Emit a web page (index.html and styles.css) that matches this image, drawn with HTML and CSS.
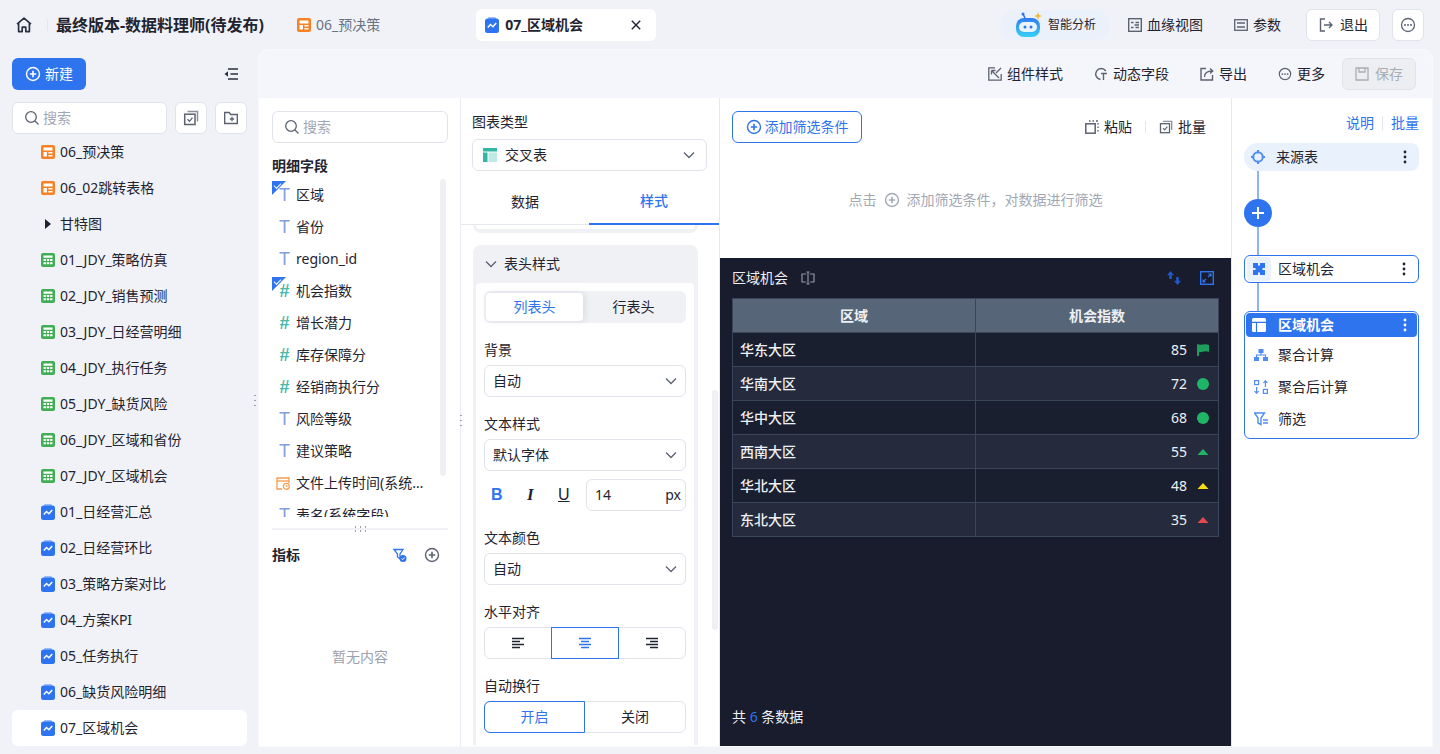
FILE: index.html
```html
<!DOCTYPE html>
<html lang="zh">
<head>
    <meta charset="UTF-8">
    <meta name="viewport" content="width=device-width, initial-scale=1.0">
    <title>最终版本-数据料理师(待发布)</title>
    <link rel="stylesheet" href="styles.css">
</head>
<body>
    <svg class="sprite" width="0" height="0">
        <defs>
            <linearGradient id="robot-head" x1="0" y1="0" x2="0" y2="1">
                <stop offset="0" stop-color="#2f7cf0"/>
                <stop offset="1" stop-color="#38d0f5"/>
            </linearGradient>
        </defs>
        <symbol id="i-home" viewBox="0 0 16 16"><path d="M1 7.2 8 1.2l7 6M2.600 6v8.600h3.600v-4.400h3.600v4.400h3.600V6" fill="none" stroke="currentColor" stroke-width="1.700" stroke-linejoin="round"/></symbol>
        <symbol id="i-sheet" viewBox="0 0 14 14"><rect width="14" height="14" rx="2" fill="#fa8123"/><path d="M2.500 2.500h9v3h-9zM2.500 7h3.400v4.500H2.500zM7.400 7h4.100v1.600H7.400zM7.400 9.900h4.100v1.600H7.400z" fill="#fff"/></symbol>
        <symbol id="i-calc" viewBox="0 0 14 14"><rect width="14" height="14" rx="2" fill="#3fae54"/><path d="M2.500 2.500h9v2.200h-9zM2.500 6h2.400v2H2.500zM5.800 6h2.400v2H5.800zM9.100 6h2.400v2H9.100zM2.500 9.300h2.400v2H2.500zM5.800 9.300h2.400v2H5.800zM9.100 9.300h2.400v2H9.100z" fill="#fff"/></symbol>
        <symbol id="i-chart" viewBox="0 0 14 16"><rect x="3" y="0" width="8" height="3" rx="1.200" fill="#9dbdf7"/><rect y="1.500" width="14" height="14.500" rx="2.500" fill="#2f74ef"/><path d="M2.800 10.500 5.500 7.500l2.400 2.200 3.300-3.700" fill="none" stroke="#fff" stroke-width="1.500"/></symbol>
        <symbol id="i-plus-c" viewBox="0 0 16 16"><circle cx="8" cy="8" r="6.500" fill="none" stroke="currentColor" stroke-width="1.400"/><path d="M8 4.800v6.400M4.800 8h6.400" stroke="currentColor" stroke-width="1.600"/></symbol>
        <symbol id="i-search" viewBox="0 0 16 16"><circle cx="7" cy="7" r="5.300" fill="none" stroke="currentColor" stroke-width="1.300"/><path d="m11 11 3.500 3.500" stroke="currentColor" stroke-width="1.300"/></symbol>
        <symbol id="i-batch" viewBox="0 0 16 16"><path d="M4.500 1.500h10v10" fill="none" stroke="currentColor" stroke-width="1.500" opacity=".7"/><rect x="1.700" y="4.200" width="10.300" height="10.300" fill="none" stroke="currentColor" stroke-width="1.500"/><path d="m4.500 9.300 2 2 3-3.600" fill="none" stroke="currentColor" stroke-width="1.300"/></symbol>
        <symbol id="i-folder" viewBox="0 0 16 16"><path d="M1.700 2.500h4.500l1.500 2h6.600v9H1.700z" fill="none" stroke="currentColor" stroke-width="1.400"/><path d="M9 6.800v4.400M6.800 9h4.400" stroke="currentColor" stroke-width="1.300"/></symbol>
        <symbol id="i-collapse" viewBox="0 0 14 12"><path d="M4 1h10M6.500 6H14M4 11h10" stroke="currentColor" stroke-width="1.700"/><path d="M4 3.300.5 6 4 8.700z" fill="currentColor"/></symbol>
        <symbol id="i-chev" viewBox="0 0 12 8"><path d="m1 1.500 5 5 5-5" fill="none" stroke="currentColor" stroke-width="1.300"/></symbol>
        <symbol id="i-more" viewBox="0 0 16 16"><circle cx="8" cy="8" r="6.500" fill="none" stroke="currentColor" stroke-width="1.300"/><circle cx="5" cy="8" r="1" fill="currentColor"/><circle cx="8" cy="8" r="1" fill="currentColor"/><circle cx="11" cy="8" r="1" fill="currentColor"/></symbol>
        <symbol id="i-dots" viewBox="0 0 4 14"><circle cx="2" cy="2" r="1.400" fill="currentColor"/><circle cx="2" cy="7" r="1.400" fill="currentColor"/><circle cx="2" cy="12" r="1.400" fill="currentColor"/></symbol>
        <symbol id="i-lineage" viewBox="0 0 14 14"><rect x=".7" y=".7" width="12.600" height="12.600" fill="none" stroke="currentColor" stroke-width="1.400"/><path d="M3 4.500h2.500M3 9.500h2.500M6.500 7h4.500M7.500 4.500H11M7.500 9.500H11" stroke="currentColor" stroke-width="1.400"/></symbol>
        <symbol id="i-param" viewBox="0 0 14 12"><rect x=".7" y=".7" width="12.600" height="10.600" fill="none" stroke="currentColor" stroke-width="1.300"/><path d="M3 4h8M3 8h8" stroke="currentColor" stroke-width="1.300"/></symbol>
        <symbol id="i-exit" viewBox="0 0 16 16"><path d="M7 2H2.500v12H7" fill="none" stroke="currentColor" stroke-width="1.400"/><path d="M6 8h8M11 5l3 3-3 3" fill="none" stroke="currentColor" stroke-width="1.400"/></symbol>
        <symbol id="i-close" viewBox="0 0 10 10"><path d="m.8.800 8.400 8.400M9.200.800.800 9.200" stroke="currentColor" stroke-width="1.400"/></symbol>
        <symbol id="i-style" viewBox="0 0 14 14"><path d="M7 .8H.8v12.400h12.400V7" fill="none" stroke="currentColor" stroke-width="1.300"/><path d="M3.500 3.500 11 11M3.500 3.500h4M3.500 3.500v4M13 1 8 6" fill="none" stroke="currentColor" stroke-width="1.300"/></symbol>
        <symbol id="i-dyn" viewBox="0 0 14 14"><path d="M11.800 4A5.500 5.500 0 1 0 6.500 12.500" fill="none" stroke="currentColor" stroke-width="1.400"/><path d="M7 6.500h6M9.500 6.500V13" stroke="currentColor" stroke-width="1.400"/></symbol>
        <symbol id="i-export" viewBox="0 0 14 14"><path d="M6 1.500H1v11.500h11.500V8" fill="none" stroke="currentColor" stroke-width="1.400"/><path d="M4.500 10c0-4 2.500-6 8-6M10 1.500 12.800 4 10 6.500" fill="none" stroke="currentColor" stroke-width="1.300"/></symbol>
        <symbol id="i-save" viewBox="0 0 14 14"><path d="M1 1h12v12H1z" fill="none" stroke="currentColor" stroke-width="1.300"/><path d="M4 1v4h6V1" fill="none" stroke="currentColor" stroke-width="1.300"/></symbol>
        <symbol id="i-paste" viewBox="0 0 14 14"><rect x=".8" y="3.800" width="9.400" height="9.400" fill="none" stroke="currentColor" stroke-width="1.500"/><path d="M4 1h1.500M7.500 1H9M11 1h2M13 3v1.500M13 6.500V8M13 10v1.500" stroke="currentColor" stroke-width="1.400"/></symbol>
        <symbol id="i-cross" viewBox="0 0 14 14"><rect width="14" height="3.500" fill="#35b5a5"/><rect y="4.500" width="4.500" height="9.500" fill="#35b5a5"/><rect x="5.500" y="4.500" width="8.500" height="9.500" fill="#bfe9e3"/></symbol>
        <symbol id="i-filter-ok" viewBox="0 0 14 14"><path d="M1 1.500h9L7 6v5L4.500 9V6z" fill="none" stroke="currentColor" stroke-width="1.300"/><circle cx="10" cy="10.500" r="3.500" fill="currentColor"/><path d="m8.500 10.500 1.200 1.200 2-2.200" fill="none" stroke="#fff"/></symbol>
        <symbol id="i-cal" viewBox="0 0 14 14"><path d="M6 13H1V2h12v5" fill="none" stroke="#f79a4d" stroke-width="1.300"/><path d="M1 5h12" stroke="#f79a4d" stroke-width="1.300"/><circle cx="10.300" cy="10.300" r="3" fill="none" stroke="#f79a4d" stroke-width="1.200"/><path d="M10.300 8.800v1.600h1.400" fill="none" stroke="#f79a4d"/></symbol>
        <symbol id="i-target" viewBox="0 0 14 14"><circle cx="7" cy="7" r="4.800" fill="none" stroke="#4f8df5" stroke-width="2"/><path d="M7 0v3.200M7 10.800V14M0 7h3.200M10.800 7H14" stroke="#4f8df5" stroke-width="2"/></symbol>
        <symbol id="i-puzzle" viewBox="0 0 12 12"><path d="M0 0h5v2.500h2V0h5v5H9.500v2H12v5H7V9.500H5V12H0V7h2.500V5H0z" fill="#2f74ef"/></symbol>
        <symbol id="i-table" viewBox="0 0 14 14"><rect width="14" height="14" rx="1.500" fill="#fff"/><path d="M0 4.300h14M4.500 4.300V14" stroke="#2f74ef" stroke-width="1.200"/></symbol>
        <symbol id="i-tree" viewBox="0 0 14 12"><path d="M4.500 0h5v4h-5zM0 8h5v4H0zM9 8h5v4H9z" fill="#4f8df5"/><path d="M2.500 8V6h9v2M7 4v2" fill="none" stroke="#4f8df5" stroke-width="1.200"/></symbol>
        <symbol id="i-swap" viewBox="0 0 14 14"><rect x=".6" y=".6" width="4" height="4" fill="none" stroke="#4f8df5" stroke-width="1.200"/><rect x="9.400" y="9.400" width="4" height="4" fill="none" stroke="#4f8df5" stroke-width="1.200"/><path d="M11.400 7V1M9.400 2.800l2-2 2 2M2.600 7v6M.6 11.200l2 2 2-2" fill="none" stroke="#4f8df5" stroke-width="1.200"/></symbol>
        <symbol id="i-filter" viewBox="0 0 14 14"><path d="M.5 1h10L7 6v6.500L4 11V6z" fill="none" stroke="#4f8df5" stroke-width="1.400"/><path d="M9 8h5M9 11h5" stroke="#4f8df5" stroke-width="1.300"/></symbol>
        <symbol id="i-left" viewBox="0 0 14 12"><path d="M1 1.500h12M1 4.500h8M1 7.500h12M1 10.500h8" stroke="currentColor" stroke-width="1.400"/></symbol>
        <symbol id="i-center" viewBox="0 0 14 12"><path d="M1 1.500h12M3 4.500h8M1 7.500h12M3 10.500h8" stroke="currentColor" stroke-width="1.400"/></symbol>
        <symbol id="i-right" viewBox="0 0 14 12"><path d="M1 1.500h12M5 4.500h8M1 7.500h12M5 10.500h8" stroke="currentColor" stroke-width="1.400"/></symbol>
        <symbol id="i-resize" viewBox="0 0 14 14"><path d="M5 3H1v8h4M9 3h4v8H9M7 1v12M5.500 1h3M5.500 13h3" fill="none" stroke="currentColor" stroke-width="1.200"/></symbol>
        <symbol id="i-sort" viewBox="0 0 14 14"><path d="M3.500 0 7 4.200H4.800V8H2.200V4.200H0zM10.500 14 7 9.800h2.200V6h2.600v3.800H14z" fill="#2257c4"/></symbol>
        <symbol id="i-expand" viewBox="0 0 14 14"><rect x=".7" y=".7" width="12.600" height="12.600" fill="none" stroke="#2f74ef" stroke-width="1.400"/><path d="M8 6l3-3M8.500 3H11v2.500M6 8l-3 3M3 8.500V11h2.500" fill="none" stroke="#2f74ef" stroke-width="1.100"/></symbol>
        <symbol id="i-plus" viewBox="0 0 12 12"><path d="M6 0v12M0 6h12" stroke="#fff" stroke-width="2"/></symbol>
    </svg>

    <header class="topbar">
        <svg class="home"><use href="#i-home"/></svg>
        <span class="topbar-sep"></span>
        <h1 class="title">最终版本-数据料理师(待发布)</h1>
        <div class="tab">
            <svg class="i14"><use href="#i-sheet"/></svg>
            <span>06_预决策</span>
        </div>
        <div class="tab tab-active">
            <svg class="tall"><use href="#i-chart"/></svg>
            <span class="tab-name">07_区域机会</span>
            <svg class="tab-close"><use href="#i-close"/></svg>
        </div>
        <div class="topbar-right">
            <div class="ai-pill">
                <svg class="robot" viewBox="0 0 28 26">
                    <path d="M10 6 8 2" stroke="#2f74ef" stroke-width="1.500"/>
                    <circle cx="8" cy="2" r="1.500" fill="#2f74ef"/>
                    <path d="m23 0 1 3 3 1-3 1-1 3-1-3-3-1 3-1z" fill="#f8b62d"/>
                    <rect x="1" y="6" width="24" height="19" rx="8" fill="url(#robot-head)"/>
                    <rect x="4" y="10" width="18" height="10" rx="5" fill="#e9f4ff"/>
                    <circle cx="10" cy="15" r="1.500" fill="#2f74ef"/>
                    <circle cx="16" cy="15" r="1.500" fill="#2f74ef"/>
                </svg>
                <span>智能分析</span>
            </div>
            <div class="top-link lineage"><svg class="i14"><use href="#i-lineage"/></svg>血缘视图</div>
            <div class="top-link param"><svg class="i14"><use href="#i-param"/></svg>参数</div>
            <div class="top-btn exit"><svg class="i16"><use href="#i-exit"/></svg>退出</div>
            <div class="top-btn square"><svg class="i16"><use href="#i-more"/></svg></div>
        </div>
    </header>

    <div class="layout">
        <aside class="sidebar">
            <div class="side-head">
                <button class="new-btn"><svg class="i16"><use href="#i-plus-c"/></svg>新建</button>
                <svg class="collapse"><use href="#i-collapse"/></svg>
            </div>
            <div class="side-tools">
                <div class="search side-search"><svg class="i16"><use href="#i-search"/></svg><span>搜索</span></div>
                <div class="tool-btn"><svg class="i16"><use href="#i-batch"/></svg></div>
                <div class="tool-btn"><svg class="i16"><use href="#i-folder"/></svg></div>
            </div>
            <ul class="tree">
                <li><svg class="i14"><use href="#i-sheet"/></svg>06_预决策</li>
                <li><svg class="i14"><use href="#i-sheet"/></svg>06_02跳转表格</li>
                <li><span class="caret"></span>甘特图</li>
                <li><svg class="i14"><use href="#i-calc"/></svg>01_JDY_策略仿真</li>
                <li><svg class="i14"><use href="#i-calc"/></svg>02_JDY_销售预测</li>
                <li><svg class="i14"><use href="#i-calc"/></svg>03_JDY_日经营明细</li>
                <li><svg class="i14"><use href="#i-calc"/></svg>04_JDY_执行任务</li>
                <li><svg class="i14"><use href="#i-calc"/></svg>05_JDY_缺货风险</li>
                <li><svg class="i14"><use href="#i-calc"/></svg>06_JDY_区域和省份</li>
                <li><svg class="i14"><use href="#i-calc"/></svg>07_JDY_区域机会</li>
                <li><svg class="tall"><use href="#i-chart"/></svg>01_日经营汇总</li>
                <li><svg class="tall"><use href="#i-chart"/></svg>02_日经营环比</li>
                <li><svg class="tall"><use href="#i-chart"/></svg>03_策略方案对比</li>
                <li><svg class="tall"><use href="#i-chart"/></svg>04_方案KPI</li>
                <li><svg class="tall"><use href="#i-chart"/></svg>05_任务执行</li>
                <li><svg class="tall"><use href="#i-chart"/></svg>06_缺货风险明细</li>
                <li class="active"><svg class="tall"><use href="#i-chart"/></svg>07_区域机会</li>
            </ul>
            <span class="grip grip-side"></span>
        </aside>

        <main class="editor">
            <div class="editor-bar">
                <div class="bar-item"><svg class="i14"><use href="#i-style"/></svg>组件样式</div>
                <div class="bar-item"><svg class="i14"><use href="#i-dyn"/></svg>动态字段</div>
                <div class="bar-item"><svg class="i14"><use href="#i-export"/></svg>导出</div>
                <div class="bar-item last"><svg class="i14"><use href="#i-more"/></svg>更多</div>
                <button class="save-btn"><svg class="i14"><use href="#i-save"/></svg>保存</button>
            </div>

            <div class="panes">
                <section class="fields">
                    <div class="search field-search"><svg class="i16"><use href="#i-search"/></svg><span>搜索</span></div>
                    <div class="fields-title">明细字段</div>
                    <div class="field-list">
                        <div class="field checked"><span class="ft">T</span>区域</div>
                        <div class="field"><span class="ft">T</span>省份</div>
                        <div class="field"><span class="ft">T</span>region_id</div>
                        <div class="field checked"><span class="fn">#</span>机会指数</div>
                        <div class="field"><span class="fn">#</span>增长潜力</div>
                        <div class="field"><span class="fn">#</span>库存保障分</div>
                        <div class="field"><span class="fn">#</span>经销商执行分</div>
                        <div class="field"><span class="ft">T</span>风险等级</div>
                        <div class="field"><span class="ft">T</span>建议策略</div>
                        <div class="field"><svg class="field-cal"><use href="#i-cal"/></svg><span class="ellipsis">文件上传时间(系统字段)</span></div>
                        <div class="field"><span class="ft">T</span>表名(系统字段)</div>
                        <span class="scroll-thumb"></span>
                    </div>
                    <div class="fields-split"><span class="grip grip-h"></span></div>
                    <div class="metric-head">
                        <span>指标</span>
                        <svg class="i14 metric-filter"><use href="#i-filter-ok"/></svg>
                        <svg class="i16 metric-add"><use href="#i-plus-c"/></svg>
                    </div>
                    <div class="empty">暂无内容</div>
                    <span class="grip grip-fields"></span>
                </section>

                <section class="config">
                    <div class="config-head">
                        <div class="label">图表类型</div>
                        <div class="select"><span class="select-val"><svg class="i14"><use href="#i-cross"/></svg>交叉表</span><svg class="chev"><use href="#i-chev"/></svg></div>
                        <div class="config-tabs">
                            <div class="config-tab">数据</div>
                            <div class="config-tab on">样式</div>
                        </div>
                    </div>
                    <div class="config-body">
                        <div class="stub-card"></div>
                        <div class="card">
                            <div class="card-head"><svg class="chev"><use href="#i-chev"/></svg>表头样式</div>
                            <div class="card-inner">
                                <div class="switch">
                                    <div class="switch-item on">列表头</div>
                                    <div class="switch-item">行表头</div>
                                </div>
                                <div class="label form-label">背景</div>
                                <div class="select"><span>自动</span><svg class="chev"><use href="#i-chev"/></svg></div>
                                <div class="label form-label">文本样式</div>
                                <div class="select"><span>默认字体</span><svg class="chev"><use href="#i-chev"/></svg></div>
                                <div class="font-row">
                                    <span class="fmt fmt-b">B</span>
                                    <span class="fmt fmt-i">I</span>
                                    <span class="fmt fmt-u">U</span>
                                    <div class="size-input"><span>14</span><span>px</span></div>
                                </div>
                                <div class="label form-label">文本颜色</div>
                                <div class="select"><span>自动</span><svg class="chev"><use href="#i-chev"/></svg></div>
                                <div class="label form-label">水平对齐</div>
                                <div class="btn-group">
                                    <div class="btn-cell"><svg class="align"><use href="#i-left"/></svg></div>
                                    <div class="btn-cell on"><svg class="align"><use href="#i-center"/></svg></div>
                                    <div class="btn-cell"><svg class="align"><use href="#i-right"/></svg></div>
                                </div>
                                <div class="label form-label">自动换行</div>
                                <div class="btn-group two">
                                    <div class="btn-cell on first">开启</div>
                                    <div class="btn-cell">关闭</div>
                                </div>
                            </div>
                        </div>
                        <span class="config-thumb"></span>
                    </div>
                </section>

                <section class="center">
                    <div class="filter-area">
                        <div class="filter-top">
                            <button class="add-filter"><svg class="i16"><use href="#i-plus-c"/></svg>添加筛选条件</button>
                            <div class="filter-actions">
                                <span class="filter-act"><svg class="i14"><use href="#i-paste"/></svg>粘贴</span>
                                <span class="act-sep"></span>
                                <span class="filter-act"><svg class="i14"><use href="#i-batch"/></svg>批量</span>
                            </div>
                        </div>
                        <div class="filter-hint">点击<svg class="i16"><use href="#i-plus-c"/></svg>添加筛选条件，对数据进行筛选</div>
                    </div>
                    <div class="preview">
                        <div class="preview-head">
                            <span>区域机会</span>
                            <svg class="i14 resize"><use href="#i-resize"/></svg>
                            <svg class="i14 sort"><use href="#i-sort"/></svg>
                            <svg class="i14 expand"><use href="#i-expand"/></svg>
                        </div>
                        <table class="data-table">
                            <thead>
                                <tr><th>区域</th><th>机会指数</th></tr>
                            </thead>
                            <tbody>
                                <tr><td>华东大区</td><td class="num">85<svg class="mark" viewBox="0 0 12 12"><path d="M0 0c4 2 8-1 12 1v7C8 6 4 9 2 8v4H0z" fill="#1f9d5c"/></svg></td></tr>
                                <tr><td>华南大区</td><td class="num">72<svg class="mark" viewBox="0 0 12 12"><circle cx="6" cy="6" r="6" fill="#20b566"/></svg></td></tr>
                                <tr><td>华中大区</td><td class="num">68<svg class="mark" viewBox="0 0 12 12"><circle cx="6" cy="6" r="6" fill="#20b566"/></svg></td></tr>
                                <tr><td>西南大区</td><td class="num">55<svg class="mark" viewBox="0 0 12 12"><path d="M6 3 11.500 9H.5z" fill="#20b566"/></svg></td></tr>
                                <tr><td>华北大区</td><td class="num">48<svg class="mark" viewBox="0 0 12 12"><path d="M6 3 11.500 9H.5z" fill="#fadb14"/></svg></td></tr>
                                <tr><td>东北大区</td><td class="num">35<svg class="mark" viewBox="0 0 12 12"><path d="M6 3 11.500 9H.5z" fill="#e5484d"/></svg></td></tr>
                            </tbody>
                        </table>
                        <div class="preview-foot">共 <em>6</em> 条数据</div>
                    </div>
                </section>

                <section class="flow">
                    <div class="flow-links">
                        <span>说明</span>
                        <span class="flow-sep"></span>
                        <span>批量</span>
                    </div>
                    <div class="node source"><svg class="i14"><use href="#i-target"/></svg><span class="node-name">来源表</span><svg class="dots"><use href="#i-dots"/></svg></div>
                    <div class="link"></div>
                    <div class="plus"><svg class="i12"><use href="#i-plus"/></svg></div>
                    <div class="link"></div>
                    <div class="node step">
                        <span class="puzzle"><svg class="i12"><use href="#i-puzzle"/></svg></span>
                        <span class="node-name">区域机会</span>
                        <svg class="dots"><use href="#i-dots"/></svg>
                    </div>
                    <div class="link"></div>
                    <div class="group">
                        <div class="group-head"><svg class="i14"><use href="#i-table"/></svg><span class="node-name">区域机会</span><svg class="dots"><use href="#i-dots"/></svg></div>
                        <div class="group-item"><svg class="i14"><use href="#i-tree"/></svg>聚合计算</div>
                        <div class="group-item"><svg class="i14"><use href="#i-swap"/></svg>聚合后计算</div>
                        <div class="group-item"><svg class="i14"><use href="#i-filter"/></svg>筛选</div>
                    </div>
                </section>
            </div>
        </main>
    </div>
</body>
</html>
```

FILE: styles.css
```css
* {
    box-sizing: border-box;
}

html,
body {
    height: 100%;
}

body {
    margin: 0;
    height: 754px;
    overflow: hidden;
    background: #f0f2f8;
    color: #1f2430;
    font-family: "Noto Sans", "Noto Sans CJK SC", sans-serif;
    font-size: 14px;
    line-height: 20px;
}

button {
    font: inherit;
    cursor: pointer;
}

ul {
    margin: 0;
    padding: 0;
    list-style: none;
}

svg {
    flex: none;
    display: block;
}

.sprite {
    position: absolute;
}

.i12 {
    width: 12px;
    height: 12px;
}

.i14 {
    width: 14px;
    height: 14px;
}

.i16 {
    width: 16px;
    height: 16px;
}

.tall {
    width: 14px;
    height: 16px;
}

/* top bar */
.topbar {
    display: flex;
    align-items: center;
    height: 50px;
    padding: 0 16px;
}

.home {
    width: 16px;
    height: 16px;
    color: #2a3040;
}

.topbar-sep {
    width: 1px;
    height: 12px;
    margin: 0 8px 0 15px;
    background: #e4e6ee;
}

.title {
    margin: 0;
    font-size: 16px;
    font-weight: 700;
    line-height: 22px;
    white-space: nowrap;
}

.tab {
    display: flex;
    align-items: center;
    gap: 5px;
    margin-left: 33px;
    color: #6b7280;
}

.tab-active {
    gap: 6px;
    width: 180px;
    height: 32px;
    margin-left: 96px;
    padding: 0 15px 0 9px;
    border-radius: 6px;
    background: #fff;
    color: #1f2430;
}

.tab-name {
    flex: 1;
    font-weight: 700;
}

.tab-close {
    width: 10px;
    height: 10px;
}

.topbar-right {
    display: flex;
    align-items: center;
    margin-left: auto;
}

.ai-pill {
    display: flex;
    align-items: center;
    gap: 5px;
    width: 110px;
    height: 30px;
    padding-left: 15px;
    border-radius: 15px;
    background: #ebf1fb;
    font-size: 12px;
}

.robot {
    width: 28px;
    height: 26px;
}

.top-link {
    display: flex;
    align-items: center;
    gap: 5px;
}

.top-link svg {
    color: #5c6272;
}

.lineage {
    margin-left: 18px;
}

.param {
    margin-left: 31px;
}

.top-btn {
    display: flex;
    align-items: center;
    justify-content: center;
    gap: 6px;
    height: 32px;
    border: 1px solid #e0e3eb;
    border-radius: 6px;
    background: #fff;
}

.top-btn svg {
    color: #5c6272;
}

.exit {
    width: 74px;
    margin-left: 25px;
}

.square {
    width: 32px;
    margin-left: 12px;
}

/* page split */
.layout {
    display: flex;
    height: 696px;
    padding-right: 8px;
}

.sidebar {
    position: relative;
    flex: 0 0 259px;
    padding: 8px 12px 0;
}

.side-head {
    display: flex;
    align-items: center;
    justify-content: space-between;
    padding-right: 9px;
}

.new-btn {
    display: flex;
    align-items: center;
    justify-content: center;
    gap: 4px;
    width: 74px;
    height: 32px;
    padding: 0;
    border: 0;
    border-radius: 6px;
    background: #2f74ef;
    color: #fff;
}

.collapse {
    width: 14px;
    height: 12px;
    color: #2a3040;
}

.side-tools {
    display: flex;
    gap: 8px;
    margin-top: 12px;
}

.search {
    display: flex;
    align-items: center;
    gap: 3px;
    height: 32px;
    padding: 0 11px;
    border: 1px solid #e0e3eb;
    border-radius: 6px;
    background: #fff;
    color: #a3a8b4;
}

.search svg {
    color: #5c6272;
}

.side-search {
    width: 155px;
}

.tool-btn {
    display: flex;
    align-items: center;
    justify-content: center;
    width: 32px;
    height: 32px;
    border: 1px solid #e0e3eb;
    border-radius: 6px;
    background: #fff;
    color: #5c6272;
}

.tree li {
    display: flex;
    align-items: center;
    gap: 5px;
    height: 36px;
    padding-left: 29px;
    border-radius: 6px;
}

.tree li.active {
    background: #fff;
}

.caret {
    width: 14px;
    height: 10px;
    background: #1f2430;
    clip-path: polygon(4px 0, 10px 5px, 4px 10px);
}

.grip {
    position: absolute;
    background-image: radial-gradient(circle, #9ca1ad 1px, transparent 1.1px);
    background-size: 4px 5px;
}

.grip-side {
    top: 343px;
    right: 2px;
    width: 4px;
    height: 15px;
}

/* editor card */
.editor {
    flex: 1;
    display: flex;
    flex-direction: column;
    min-width: 0;
    overflow: hidden;
    border-radius: 10px 10px 0 0;
    background: #f5f6fb;
    box-shadow: 0 0 0 1px #f8f9fc;
}

.editor-bar {
    display: flex;
    align-items: center;
    justify-content: flex-end;
    flex: 0 0 48px;
    padding-right: 16px;
}

.bar-item {
    display: flex;
    align-items: center;
    gap: 5px;
    margin-right: 31px;
}

.bar-item svg {
    color: #5c6272;
}

.bar-item.last {
    margin-right: 17px;
}

.save-btn {
    display: flex;
    align-items: center;
    justify-content: center;
    gap: 6px;
    width: 74px;
    height: 32px;
    padding: 0;
    border: 1px solid #e0e3e8;
    border-radius: 6px;
    background: #eceef1;
    color: #a9adb5;
}

.panes {
    flex: 1;
    display: flex;
    min-height: 0;
    background: #fff;
}

/* fields pane */
.fields {
    position: relative;
    display: flex;
    flex-direction: column;
    flex: 0 0 202px;
    min-width: 0;
    padding: 13px 12px 0 13px;
    border-right: 1px solid #e9ebf1;
}

.field-search {
    width: 176px;
    flex: none;
}

.fields-title {
    margin-top: 13px;
    font-weight: 700;
}

.field-list {
    position: relative;
    flex: 0 0 338px;
    margin-top: 3px;
    overflow: hidden;
}

.field {
    position: relative;
    display: flex;
    align-items: center;
    gap: 5px;
    height: 32px;
    padding-left: 6px;
}

.ft,
.fn {
    width: 13px;
    font-family: "Liberation Sans", sans-serif;
    font-size: 18px;
    text-align: center;
}

.ft {
    color: #7f9fdd;
}

.fn {
    color: #4cb8a8;
    font-weight: 700;
}

.field-cal {
    width: 14px;
    height: 14px;
    margin-left: -2px;
    margin-right: 1px;
}

.ellipsis {
    width: 132px;
    overflow: hidden;
    white-space: nowrap;
    text-overflow: ellipsis;
}

.checked::before {
    content: "";
    position: absolute;
    top: 2px;
    left: 0;
    width: 14px;
    height: 14px;
    background: #2f74ef;
    clip-path: polygon(0 0, 100% 0, 0 100%);
}

.checked::after {
    content: "";
    position: absolute;
    top: 4px;
    left: 2px;
    width: 6px;
    height: 3px;
    border-left: 1px solid #fff;
    border-bottom: 1px solid #fff;
    transform: rotate(-45deg);
}

.scroll-thumb {
    position: absolute;
    top: 0;
    right: 2px;
    width: 6px;
    height: 297px;
    border-radius: 3px;
    background: #eef0f3;
}

.fields-split {
    position: relative;
    flex: none;
    height: 2px;
    margin-top: 11px;
    background: #f1f2f5;
}

.grip-h {
    top: -3px;
    left: 81px;
    width: 15px;
    height: 9px;
    background-size: 5px 4px;
}

.grip-fields {
    top: 315px;
    right: -3px;
    width: 4px;
    height: 15px;
}

.metric-head {
    display: flex;
    align-items: center;
    margin-top: 15px;
    padding-right: 8px;
    font-weight: 700;
}

.metric-filter {
    margin-left: auto;
    color: #2f74ef;
}

.metric-add {
    margin: 0 0 0 17px;
    color: #5c6272;
}

.empty {
    margin-top: 82px;
    color: #9ca1ad;
    text-align: center;
}

/* config pane */
.config {
    display: flex;
    flex-direction: column;
    flex: 0 0 259px;
    min-width: 0;
    min-height: 0;
    border-right: 1px solid #e6e8ee;
}

.config-head {
    flex: none;
    padding: 14px 12px 0 11px;
}

.config-head .label {
    margin-bottom: 7px;
}

.select {
    display: flex;
    align-items: center;
    justify-content: space-between;
    height: 32px;
    padding: 0 8px;
    border: 1px solid #e0e3eb;
    border-radius: 6px;
    background: #fff;
}

.config-head .select {
    padding: 0 11px 0 10px;
}

.select-val {
    display: flex;
    align-items: center;
    gap: 8px;
}

.chev {
    width: 12px;
    height: 8px;
    color: #5c6272;
}

.config-tabs {
    display: flex;
    height: 54px;
    margin: 0 -12px 0 -11px;
    border-bottom: 1px solid #e6e8ee;
}

.config-tab {
    display: flex;
    align-items: center;
    justify-content: center;
    flex: 0 0 128px;
    padding-top: 8px;
}

.config-tab.on {
    flex: 0 0 130px;
    margin-bottom: -1px;
    border-bottom: 2px solid #2f74ef;
    color: #2f74ef;
    font-weight: 500;
}

.config-body {
    position: relative;
    flex: 1;
    min-height: 0;
    padding: 0 21px 0 12px;
    overflow: hidden;
}

.stub-card {
    height: 8px;
    padding: 0 3px 4px;
    border-radius: 0 0 8px 8px;
    background: #f0f1f5;
}

.stub-card::before {
    content: "";
    display: block;
    height: 4px;
    border-radius: 0 0 4px 4px;
    background: #fff;
}

.card {
    margin-top: 12px;
    padding: 0 4px 0 3px;
    border-radius: 8px 8px 0 0;
    background: #f0f1f5;
}

.card-head {
    display: flex;
    align-items: center;
    gap: 7px;
    height: 38px;
    padding-left: 9px;
}

.card-inner {
    padding: 8px 8px 12px;
    border-radius: 4px 4px 0 0;
    background: #fff;
}

.switch {
    display: flex;
    height: 32px;
    padding: 2px;
    border-radius: 6px;
    background: #f0f1f5;
}

.switch-item {
    display: flex;
    flex: 1;
    align-items: center;
    justify-content: center;
    border-radius: 4px;
}

.switch-item.on {
    flex: 0 0 97px;
    background: #fff;
    color: #2f74ef;
    box-shadow: 2px 0 6px rgba(30, 40, 70, 0.1);
}

.form-label {
    margin-top: 17px;
    margin-bottom: 5px;
    height: 20px;
}

.font-row {
    display: flex;
    align-items: center;
    height: 32px;
    margin-top: 8px;
}

.fmt {
    width: 34px;
    font-family: "Liberation Sans", sans-serif;
    font-size: 16px;
}

.fmt-b {
    padding-left: 7px;
    color: #2f74ef;
    font-weight: 700;
}

.fmt-i {
    padding-left: 9px;
    font-family: "Liberation Serif", serif;
    font-style: italic;
    font-weight: 700;
    font-size: 17px;
}

.fmt-u {
    width: 34px;
    padding-left: 6px;
    text-decoration: underline;
}

.size-input {
    display: flex;
    align-items: center;
    justify-content: space-between;
    width: 100px;
    height: 32px;
    margin-left: auto;
    padding: 0 4px 0 8px;
    border: 1px solid #e0e3eb;
    border-radius: 6px;
}

.btn-group {
    display: grid;
    grid-template-columns: 66px 68px 66px;
    height: 32px;
    border: 1px solid #e0e3eb;
    border-radius: 6px;
}

.btn-group.two {
    grid-template-columns: 100px 100px;
}

.btn-cell {
    display: flex;
    align-items: center;
    justify-content: center;
    margin: -1px 0;
}

.btn-cell:first-child {
    margin-left: -1px;
}

.btn-cell.on {
    border: 1px solid #2f74ef;
    color: #2f74ef;
}

.btn-cell.first {
    border-radius: 6px 0 0 6px;
}

.align {
    width: 14px;
    height: 12px;
}

.config-thumb {
    position: absolute;
    top: 165px;
    right: 1px;
    width: 6px;
    height: 240px;
    border-radius: 3px;
    background: #eef0f3;
}

/* preview pane */
.center {
    display: flex;
    flex-direction: column;
    flex: 0 0 512px;
    min-width: 0;
    border-right: 1px solid #e6e8ee;
}

.filter-area {
    flex: 0 0 160px;
    padding: 13px 12px 0;
}

.filter-top {
    display: flex;
    align-items: center;
    justify-content: space-between;
}

.add-filter {
    display: flex;
    align-items: center;
    justify-content: center;
    gap: 3px;
    width: 130px;
    height: 32px;
    padding: 0;
    border: 1px solid #2f74ef;
    border-radius: 6px;
    background: #fff;
    color: #2f74ef;
}

.filter-actions {
    display: flex;
    align-items: center;
    padding-right: 13px;
}

.filter-act {
    display: flex;
    align-items: center;
    gap: 5px;
}

.filter-act svg {
    color: #5c6272;
}

.act-sep {
    width: 1px;
    height: 12px;
    margin: 0 13px;
    background: #e4e6ee;
}

.filter-hint {
    display: flex;
    align-items: center;
    justify-content: center;
    gap: 7px;
    margin-top: 47px;
    color: #a3a8b4;
}

.preview {
    display: flex;
    flex-direction: column;
    flex: 1;
    padding: 0 12px;
    background: #181c2c;
    color: #eef0f4;
}

.preview-head {
    display: flex;
    align-items: center;
    height: 40px;
}

.resize {
    margin-left: 13px;
    color: #8f95a3;
}

.sort {
    margin-left: auto;
}

.expand {
    margin: 0 5px 0 19px;
}

.data-table {
    width: 487px;
    border-collapse: collapse;
    table-layout: fixed;
}

.data-table th,
.data-table td {
    height: 34px;
    padding: 0 7px;
    border: 1px solid #3a4657;
}

.data-table th {
    background: #566678;
    font-weight: 700;
}

.data-table td {
    font-weight: 500;
}

.data-table tbody tr:nth-child(odd) {
    background: #1a1f2f;
}

.data-table tbody tr:nth-child(even) {
    background: #252b3c;
}

.data-table td.num {
    padding-right: 9px;
    font-weight: 400;
    text-align: right;
}

.mark {
    display: inline-block;
    width: 12px;
    height: 12px;
    margin-left: 10px;
    vertical-align: -1px;
}

.preview-foot {
    margin-top: auto;
    margin-bottom: 19px;
    white-space: pre;
}

.preview-foot em {
    color: #2f74ef;
    font-style: normal;
}

/* flow pane */
.flow {
    flex: 1;
    min-width: 0;
    padding: 15px 13px 0 12px;
}

.flow-links {
    display: flex;
    align-items: center;
    justify-content: flex-end;
    height: 20px;
    margin-bottom: 10px;
    color: #2f74ef;
}

.flow-sep {
    width: 1px;
    height: 14px;
    margin: 0 8px;
    background: #e4e6ee;
}

.node {
    display: flex;
    align-items: center;
    height: 28px;
}

.node-name {
    flex: 1;
}

.dots {
    width: 4px;
    height: 14px;
    margin-right: 12px;
    color: #1f2430;
}

.source {
    gap: 11px;
    padding-left: 7px;
    border-radius: 14px 8px 8px 14px;
    background: #e9f1fd;
}

.link {
    width: 2px;
    height: 28px;
    margin-left: 13px;
    background: #8fb4f5;
}

.plus {
    display: flex;
    align-items: center;
    justify-content: center;
    width: 28px;
    height: 28px;
    border-radius: 50%;
    background: #2f74ef;
}

.step {
    gap: 7px;
    padding-left: 2px;
    border: 1px solid #2f74ef;
    border-radius: 6px;
}

.puzzle {
    display: flex;
    align-items: center;
    justify-content: center;
    width: 24px;
    height: 24px;
    border-radius: 4px;
    background: #e9f1fd;
}

.group {
    height: 128px;
    padding: 1px;
    border: 1px solid #2f74ef;
    border-radius: 6px;
}

.group-head {
    display: flex;
    align-items: center;
    gap: 12px;
    height: 24px;
    padding-left: 6px;
    border-radius: 4px;
    background: #2f74ef;
    color: #fff;
    font-weight: 700;
}

.group-head .dots {
    margin-right: 10px;
    color: #fff;
}

.group-item {
    display: flex;
    align-items: center;
    gap: 10px;
    height: 32px;
    padding-left: 8px;
}

.group-head + .group-item {
    margin-top: 2px;
}
```
